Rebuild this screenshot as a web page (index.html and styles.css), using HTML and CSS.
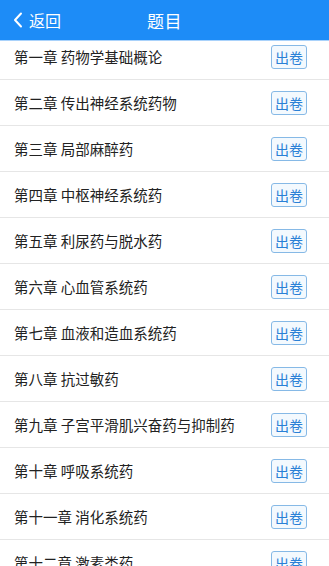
FILE: index.html
```html
<!DOCTYPE html>
<html lang="zh">
<head>
<meta charset="utf-8">
<link rel="stylesheet" href="styles.css">
</head>
<body>
<header class="nav">
  <div class="back">
    <svg class="chev" width="10" height="16" viewBox="0 0 10 16"><path d="M8 1.5 L2 8 L8 14.5" fill="none" stroke="#fff" stroke-width="2" stroke-linecap="round" stroke-linejoin="round"/></svg>
    <span>返回</span>
  </div>
  <div class="title">题目</div>
</header>
<main class="list">
  <div class="row"><span class="name">第一章 药物学基础概论</span><span class="btn">出卷</span></div>
  <div class="row"><span class="name">第二章 传出神经系统药物</span><span class="btn">出卷</span></div>
  <div class="row"><span class="name">第三章 局部麻醉药</span><span class="btn">出卷</span></div>
  <div class="row"><span class="name">第四章 中枢神经系统药</span><span class="btn">出卷</span></div>
  <div class="row"><span class="name">第五章 利尿药与脱水药</span><span class="btn">出卷</span></div>
  <div class="row"><span class="name">第六章 心血管系统药</span><span class="btn">出卷</span></div>
  <div class="row"><span class="name">第七章 血液和造血系统药</span><span class="btn">出卷</span></div>
  <div class="row"><span class="name">第八章 抗过敏药</span><span class="btn">出卷</span></div>
  <div class="row"><span class="name">第九章 子宫平滑肌兴奋药与抑制药</span><span class="btn">出卷</span></div>
  <div class="row"><span class="name">第十章 呼吸系统药</span><span class="btn">出卷</span></div>
  <div class="row"><span class="name">第十一章 消化系统药</span><span class="btn">出卷</span></div>
  <div class="row"><span class="name">第十二章 激素类药</span><span class="btn">出卷</span></div>
</main>
</body>
</html>
```
FILE: styles.css
```css
html, body {
  margin: 0;
  padding: 0;
  background: #fff;
  font-family: "Noto Sans CJK SC", "Noto Sans", sans-serif;
  overflow: hidden;
  height: 566px;
}
.nav {
  position: relative;
  z-index: 2;
  height: 40px;
  background: #1d8cf7;
  display: flex;
  align-items: center;
  justify-content: center;
  color: #fff;
  box-shadow: 0 1px 0 #a9d2fb;
}
.back {
  position: absolute;
  left: 13px;
  top: 0;
  height: 40px;
  display: flex;
  align-items: center;
  gap: 6px;
  font-size: 16px;
}
.chev { display: block; }
.title {
  font-size: 17px;
  letter-spacing: 0.5px;
}
.list {
  margin-top: -6px;
  position: relative;
  z-index: 1;
}
.row {
  height: 45px;
  border-bottom: 1px solid #e6e6e6;
  display: flex;
  align-items: center;
  justify-content: space-between;
  padding: 0 22px 0 14px;
}
.name {
  font-size: 14.5px;
  color: #222;
}
.btn {
  font-size: 14px;
  color: #2a80d6;
  border: 1px solid #86b9e6;
  border-radius: 3px;
  background: #f3f9fe;
  padding: 0 3px;
  height: 22px;
  line-height: 22px;
}
```
